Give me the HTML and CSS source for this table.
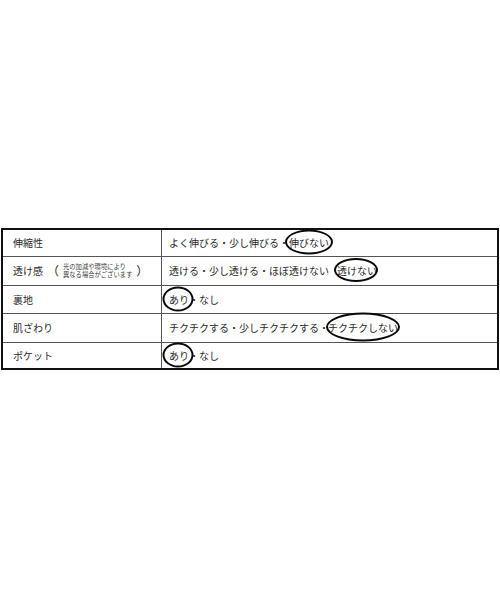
FILE: index.html
```html
<!DOCTYPE html>
<html lang="ja">
<head>
<meta charset="utf-8">
<title>素材情報</title>
<link rel="stylesheet" href="styles.css">
</head>
<body>
<div class="spec">
  <div class="k">伸縮性</div>
  <div class="v">よく伸びる・少し伸びる・<span class="circ c-nobi">伸びない</span></div>

  <div class="k"><span>透け感</span><span class="paren open">（</span><span class="note">光の加減や環境により<br>異なる場合がございます</span><span class="paren close">）</span></div>
  <div class="v">透ける・少し透ける・ほぼ透けない<span class="circ c-suke">透けない</span></div>

  <div class="k">裏地</div>
  <div class="v"><span class="circ c-ari">あり</span>・なし</div>

  <div class="k">肌ざわり</div>
  <div class="v">チクチクする・少しチクチクする・<span class="circ c-chiku">チクチクしない</span></div>

  <div class="k last">ポケット</div>
  <div class="v last"><span class="circ c-ari">あり</span>・なし</div>
</div>
</body>
</html>
```

FILE: styles.css
```css
html, body {
  margin: 0;
  padding: 0;
  background: #ffffff;
}

body {
  font-family: "Noto Sans CJK JP", "Noto Sans", sans-serif;
  color: #2a2a2a;
  font-size: 10px;
  line-height: 14px;
}

.spec {
  margin: 228px 1px 0 1px;
  width: 494px;
  border: 2px solid #111111;
  display: grid;
  grid-template-columns: 159px 1fr;
  grid-template-rows: 27px 29px 28px 29px 25px;
}

.k,
.v {
  box-sizing: border-box;
  display: flex;
  align-items: center;
  white-space: nowrap;
  border-bottom: 1px solid #555555;
}

.k {
  padding-left: 10px;
  border-right: 1px solid #555555;
}

.v {
  padding-left: 7px;
}

.k.last,
.v.last {
  border-bottom: none;
}

.paren {
  font-size: 12px;
  line-height: 14px;
}

.paren.open {
  margin-left: 4px;
}

.paren.close {
  margin-left: 4px;
}

.note {
  margin-left: 4px;
  font-size: 6.3px;
  line-height: 8px;
  color: #3a3a3a;
}

.circ {
  position: relative;
  display: inline-block;
}

.circ::before {
  content: "";
  position: absolute;
  left: 50%;
  top: 50%;
  width: var(--w);
  height: var(--h);
  box-sizing: border-box;
  border: 2px solid #0a0a0a;
  border-radius: 50%;
  transform: translate(calc(-50% + var(--dx, 0px)), calc(-50% - 1px));
}

.c-nobi {
  --w: 48px;
  --h: 25px;
}

.c-suke {
  margin-left: 8px;
  --w: 44px;
  --h: 24px;
  --dx: -1px;
}

.c-ari {
  --w: 31px;
  --h: 25px;
  --dx: -1px;
}

.c-chiku {
  margin-left: -1px;
  --w: 74px;
  --h: 29px;
}
```
